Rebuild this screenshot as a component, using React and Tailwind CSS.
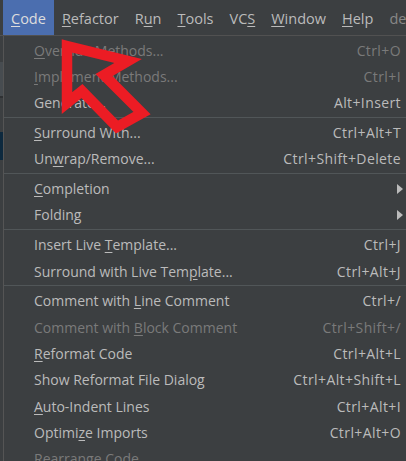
const menus = [
  { pre: "", u: "C", post: "ode", active: true },
  { pre: "", u: "R", post: "efactor" },
  { pre: "R", u: "u", post: "n" },
  { pre: "", u: "T", post: "ools" },
  { pre: "VC", u: "S", post: "" },
  { pre: "", u: "W", post: "indow" },
  { pre: "", u: "H", post: "elp" },
];

const items = [
  { pre: "", u: "O", post: "verride Methods...", key: "Ctrl+O", off: true },
  { pre: "", u: "I", post: "mplement Methods...", key: "Ctrl+I", off: true },
  { pre: "Generate...", key: "Alt+Insert" },
  "sep",
  { pre: "", u: "S", post: "urround With...", key: "Ctrl+Alt+T" },
  { pre: "Un", u: "w", post: "rap/Remove...", key: "Ctrl+Shift+Delete" },
  "sep",
  { pre: "", u: "C", post: "ompletion", sub: true },
  { pre: "Folding", sub: true },
  "sep",
  { pre: "Insert Live ", u: "T", post: "emplate...", key: "Ctrl+J" },
  { pre: "Surround with Live Tem", u: "p", post: "late...", key: "Ctrl+Alt+J" },
  "sep",
  { pre: "Comment with ", u: "L", post: "ine Comment", key: "Ctrl+/" },
  { pre: "Comment with ", u: "B", post: "lock Comment", key: "Ctrl+Shift+/", off: true },
  { pre: "", u: "R", post: "eformat Code", key: "Ctrl+Alt+L" },
  { pre: "Show Reformat File Dialog", key: "Ctrl+Alt+Shift+L" },
  { pre: "", u: "A", post: "uto-Indent Lines", key: "Ctrl+Alt+I" },
  { pre: "Optimi", u: "z", post: "e Imports", key: "Ctrl+Alt+O" },
  { pre: "Rearrange Code", off: true },
];

function Label({ item }) {
  return (
    <span className="whitespace-nowrap">
      {item.pre}
      {item.u ? <span className="underline underline-offset-2">{item.u}</span> : null}
      {item.post}
    </span>
  );
}

function Arrow() {
  return (
    <svg
      className="pointer-events-none absolute left-0 top-0"
      width="406"
      height="461"
      viewBox="0 0 406 461"
    >
      <polygon
        points="67,46 128,61 104,75 142,113 117,127 82,91 67,103"
        fill="none"
        stroke="#ec1c24"
        strokeWidth="10.5"
        strokeLinejoin="miter"
        strokeMiterlimit="10"
      />
    </svg>
  );
}

export default function App() {
  return (
    <div
      className="relative h-[461px] w-[406px] overflow-hidden bg-[#3c3f41] text-[14px] text-[#bbbbbb]"
      style={{ fontFamily: '"Open Sans", "Noto Sans", sans-serif' }}
    >
      <div className="flex h-[36px] items-stretch border-b border-[#515151] pl-[3px] text-[14.5px]">
        {menus.map((m, i) => (
          <div
            key={i}
            className={
              m.active
                ? "flex items-center bg-[#4b6eaf] px-[8px] pt-[2px] text-[#dddddd]"
                : "flex items-center px-[8px] pt-[2px]"
            }
          >
            <Label item={m} />
          </div>
        ))}
        <div className="flex items-center px-[8px] pt-[2px] text-[#888888]">de</div>
      </div>

      <div className="flex">
        <div className="flex w-[3px] flex-col">
          <div className="h-[26px] bg-[#3c3f41]" />
          <div className="h-[34px] bg-[#474c50]" />
          <div className="h-[2px] bg-[#2f3133]" />
          <div className="h-[34px] bg-[#3c3f41]" />
          <div className="h-[28px] bg-[#0d293e]" />
        </div>
        <div className="flex-1 border-l border-[#555555] pt-[1px]">
          {items.map((it, i) =>
            it === "sep" ? (
              <div key={i} className="flex h-[3.5px] items-center">
                <div className="h-px w-full bg-[#515658]" />
              </div>
            ) : (
              <div
                key={i}
                className={
                  it.off
                    ? "flex h-[26.3px] items-center justify-between pl-[30px] pr-[5px] text-[#7a7a7a]"
                    : "flex h-[26.3px] items-center justify-between pl-[30px] pr-[5px]"
                }
              >
                <Label item={it} />
                {it.sub ? (
                  <div className="mr-[-2px] h-0 w-0 border-y-[5px] border-l-[6px] border-y-transparent border-l-[#bbbbbb]" />
                ) : (
                  <span className="whitespace-nowrap tracking-[0.4px]">{it.key}</span>
                )}
              </div>
            )
          )}
        </div>
      </div>

      <Arrow />
    </div>
  );
}
